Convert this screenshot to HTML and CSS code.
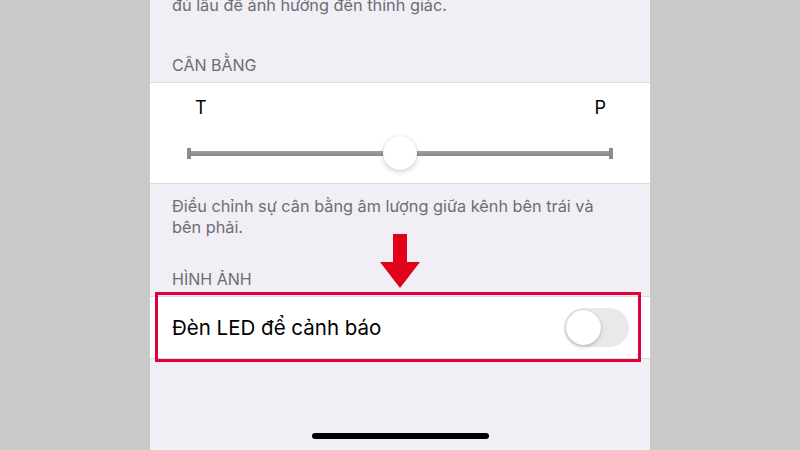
FILE: index.html
```html
<!DOCTYPE html>
<html lang="vi">
<head>
<meta charset="utf-8">
<title>Âm thanh</title>
<link rel="stylesheet" href="styles.css">
</head>
<body>
<div class="phone">
  <p class="footer-note top-note">đủ lâu để ảnh hưởng đến thính giác.</p>
  <h2 class="section-header">CÂN BẰNG</h2>
  <div class="group balance">
    <div class="balance-labels"><span>T</span><span>P</span></div>
    <div class="slider">
      <div class="track"></div>
      <div class="knob"></div>
    </div>
  </div>
  <p class="footer-note desc">Điều chỉnh sự cân bằng âm lượng giữa kênh bên trái và bên phải.</p>
  <h2 class="section-header second">HÌNH ẢNH</h2>
  <div class="group row">
    <span class="row-label">Đèn LED để cảnh báo</span>
    <div class="toggle"><div class="toggle-knob"></div></div>
  </div>
  <div class="highlight"></div>
  <svg class="arrow" width="42" height="56" viewBox="0 0 42 56"><path d="M14 0 H28 V28 H41 L21 54 L1 28 H14 Z" fill="#e3001b"/></svg>
  <div class="home-indicator"></div>
</div>
</body>
</html>
```
FILE: styles.css
```css
html, body {
  margin: 0;
  padding: 0;
  background: #c9c9c9;
}
.phone {
  position: relative;
  width: 500px;
  height: 450px;
  margin: 0 auto;
  background: #f0eff5;
  overflow: hidden;
  font-family: "Inter", "Roboto", sans-serif;
  display: flex;
  flex-direction: column;
}
.footer-note {
  margin: 0;
  padding: 0 22px;
  font-size: 16.3px;
  line-height: 21px;
  color: #6d6d72;
}
.top-note {
  margin-top: -5px;
  height: 22px;
}
.section-header {
  margin: 0;
  padding: 38px 22px 7px;
  font-size: 16px;
  line-height: 20px;
  font-weight: 400;
  color: #6d6d72;
}
.section-header.second {
  padding-top: 31px;
}
.group {
  background: #fff;
  border-top: 1px solid #dcdce0;
  border-bottom: 1px solid #dcdce0;
}
.balance {
  height: 100px;
  box-sizing: content-box;
}
.balance-labels {
  display: flex;
  justify-content: space-between;
  padding: 14px 44px 0 45px;
  font-size: 18px;
  line-height: 22px;
  color: #000;
}
.slider {
  position: relative;
  margin: 17px 37px 0;
  height: 34px;
  display: flex;
  align-items: center;
}
.track {
  flex: 1;
  height: 5px;
  background: linear-gradient(#a0a0a0, #8a8a8a);
  position: relative;
}
.track::before, .track::after {
  content: "";
  position: absolute;
  top: -3px;
  width: 4px;
  height: 11px;
  background: #8c8c8c;
}
.track::before { left: 0; }
.track::after { right: 0; }
.knob {
  position: absolute;
  left: calc(50% - 17px);
  top: 0;
  width: 34px;
  height: 34px;
  border-radius: 50%;
  background: #fff;
  box-shadow: 0 2px 5px rgba(0,0,0,0.18), 0 0 1px rgba(0,0,0,0.2);
}
.desc {
  padding-top: 12px;
  padding-right: 46px;
}
.row {
  height: 61px;
  display: flex;
  align-items: center;
  justify-content: space-between;
  padding: 0 21px 0 22px;
}
.row-label {
  font-size: 20.5px;
  color: #000;
}
.toggle {
  width: 65px;
  height: 39px;
  border-radius: 20px;
  background: #e9e9eb;
  position: relative;
}
.toggle-knob {
  position: absolute;
  left: 2px;
  top: 2px;
  width: 35px;
  height: 35px;
  border-radius: 50%;
  background: #fff;
  box-shadow: 0 2px 4px rgba(0,0,0,0.18), 0 0 1px rgba(0,0,0,0.25);
}
.highlight {
  position: absolute;
  left: 5px;
  top: 292px;
  width: 486px;
  height: 70px;
  box-sizing: border-box;
  border: 3px solid #e0003a;
}
.arrow {
  position: absolute;
  left: 229px;
  top: 234px;
}
.home-indicator {
  position: absolute;
  left: 162px;
  bottom: 11px;
  width: 177px;
  height: 6px;
  border-radius: 3px;
  background: #000;
}
```
